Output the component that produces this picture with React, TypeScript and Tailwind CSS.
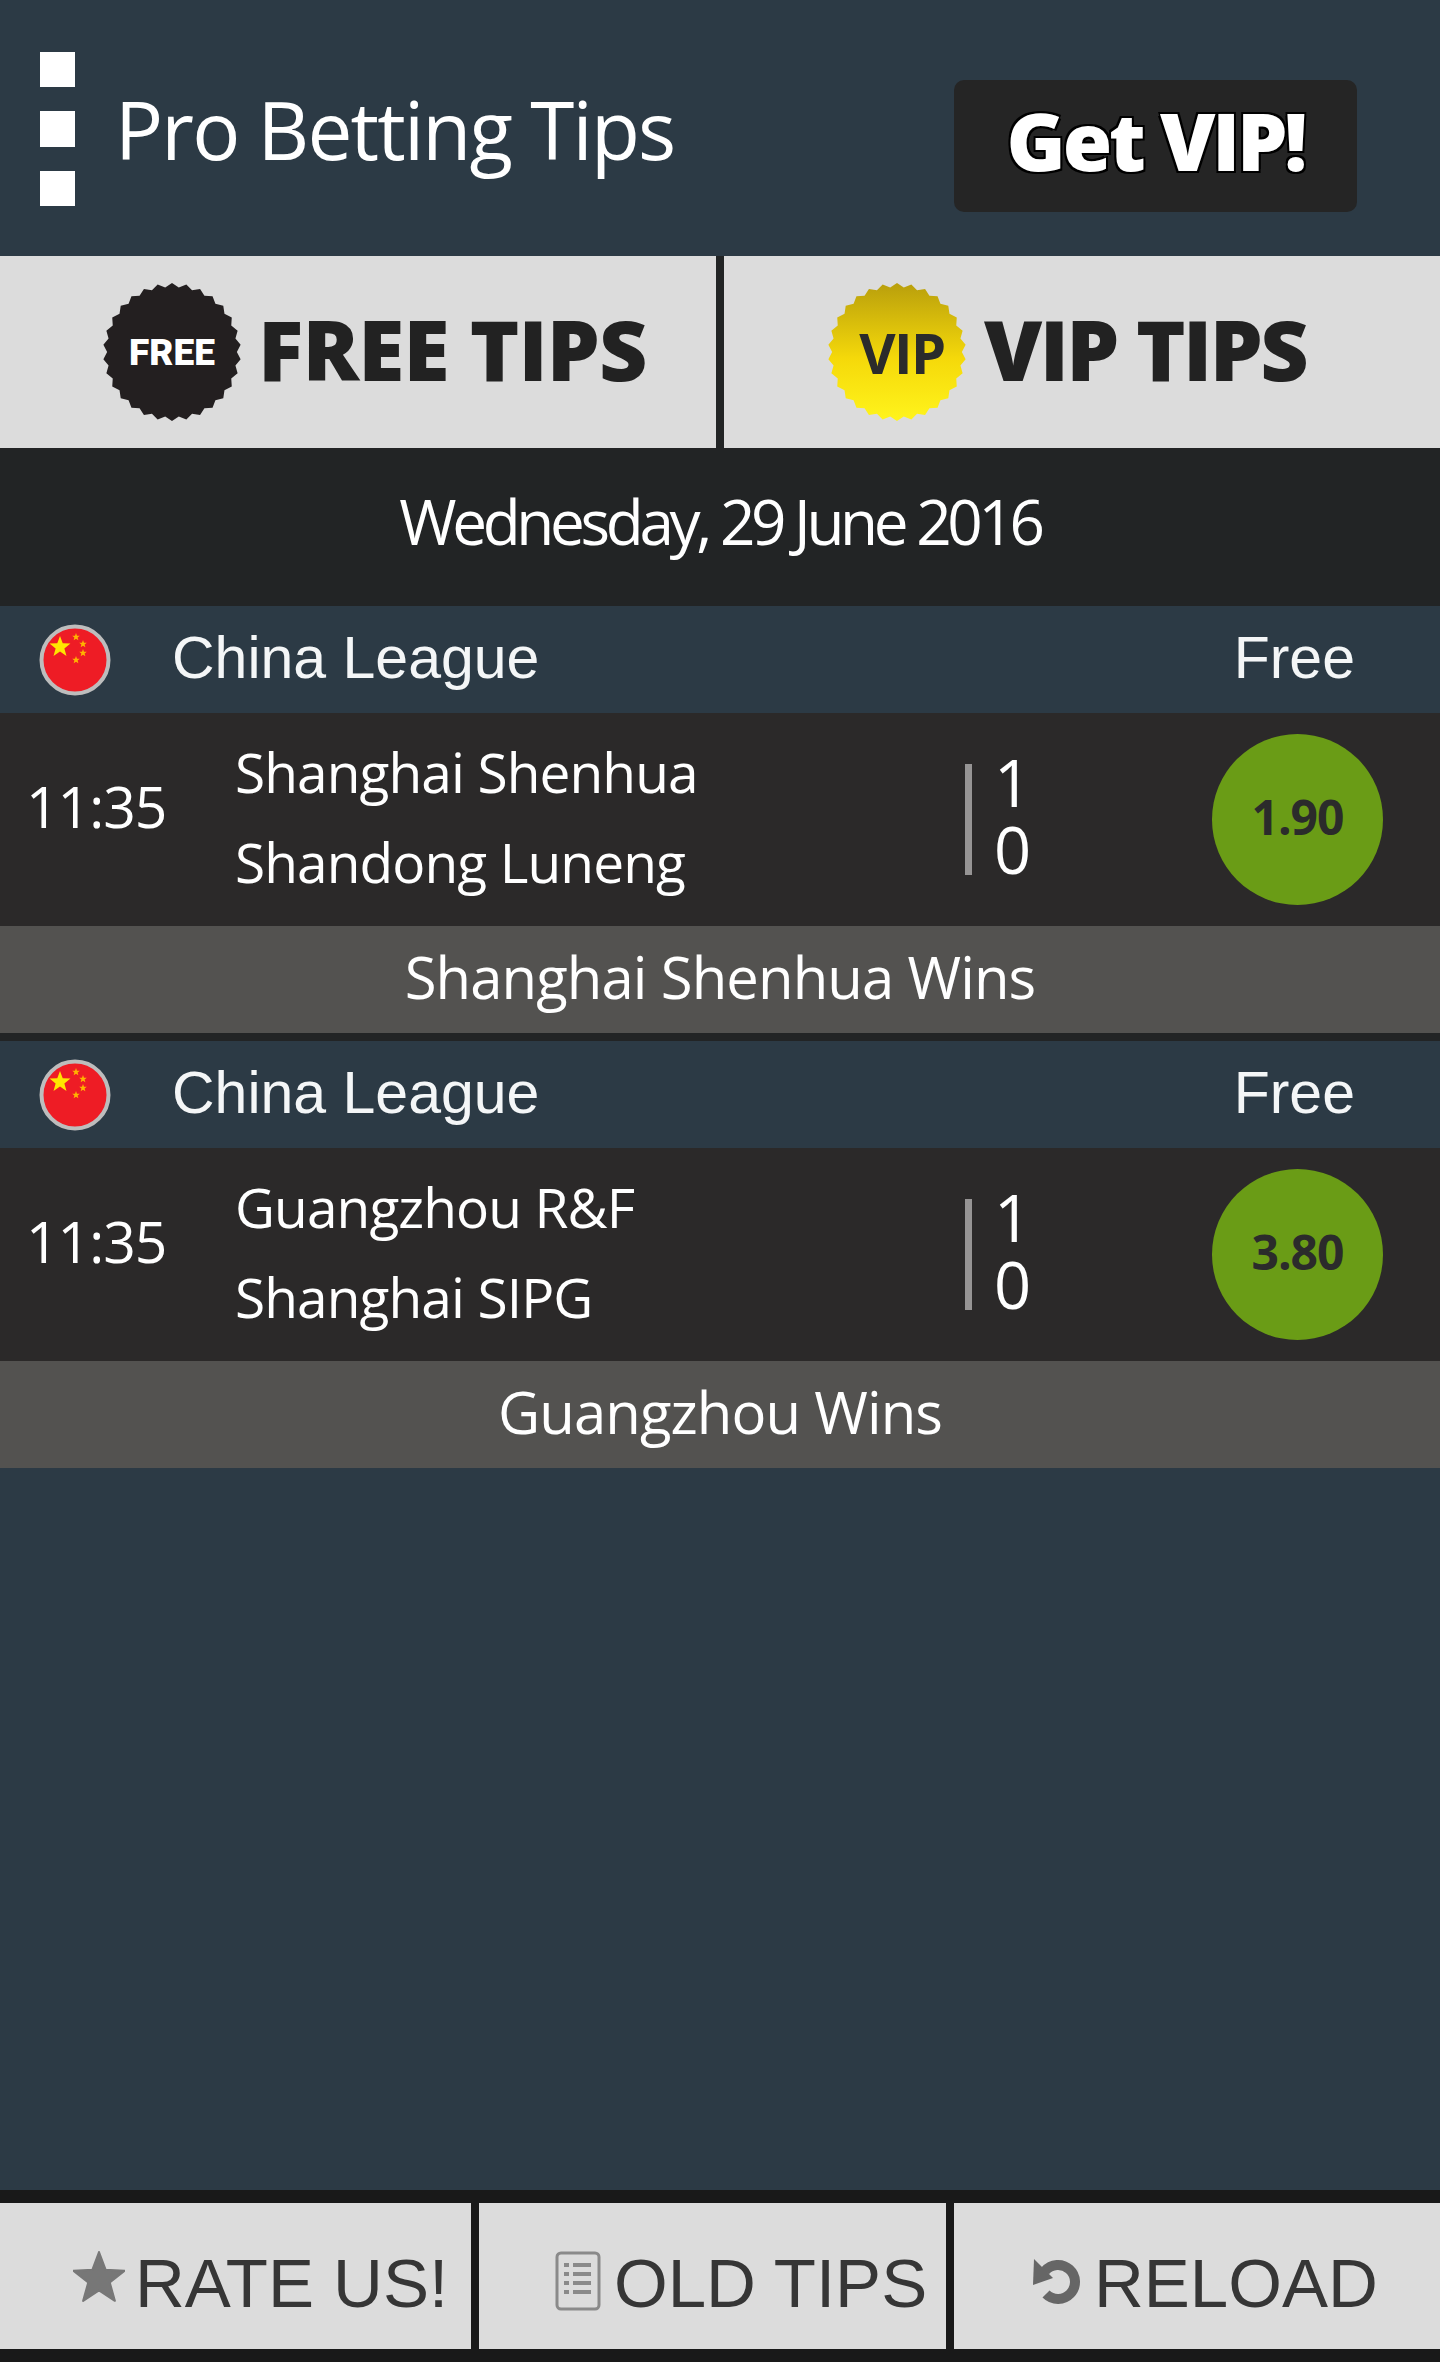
const OPEN = "font-['Open_Sans',sans-serif]";
const ARIAL = "font-['Liberation_Sans',sans-serif]";

// scalloped seal outline used behind FREE / VIP
function sealPoints(teeth: number, outer: number, inner: number) {
  const pts: string[] = [];
  for (let i = 0; i < teeth * 2; i++) {
    const r = i % 2 === 0 ? outer : inner;
    const a = (Math.PI * i) / teeth - Math.PI / 2;
    pts.push(`${(50 + r * Math.cos(a)).toFixed(2)},${(50 + r * Math.sin(a)).toFixed(2)}`);
  }
  return pts.join(" ");
}

function starPoints(cx: number, cy: number, r: number) {
  const pts: string[] = [];
  for (let i = 0; i < 10; i++) {
    const rad = i % 2 === 0 ? r : r * 0.42;
    const a = (Math.PI * i) / 5 - Math.PI / 2;
    pts.push(`${(cx + rad * Math.cos(a)).toFixed(2)},${(cy + rad * Math.sin(a)).toFixed(2)}`);
  }
  return pts.join(" ");
}

function Seal({ vip }: { vip?: boolean }) {
  return (
    <div className="grid h-[138px] w-[138px] shrink-0 place-items-center">
      <svg viewBox="0 0 100 100" className="h-[138px] w-[138px] [grid-area:1/1]">
        <defs>
          <linearGradient id="vipGold" x1="0" y1="0" x2="0" y2="1">
            <stop offset="0" stopColor="#b99f0c" />
            <stop offset="0.55" stopColor="#f5d90a" />
            <stop offset="1" stopColor="#fff41c" />
          </linearGradient>
        </defs>
        <polygon points={sealPoints(30, 50, 47)} fill={vip ? "url(#vipGold)" : "#231f20"} />
      </svg>
      {vip ? (
        <span className={`${OPEN} pl-[10px] text-[56px] leading-none font-bold tracking-[-1.5px] text-[#2b2b2b] [grid-area:1/1]`}>
          VIP
        </span>
      ) : (
        <span className="font-['Roboto',sans-serif] text-[37px] leading-none font-black text-white [grid-area:1/1]">
          FREE
        </span>
      )}
    </div>
  );
}

function Flag() {
  return (
    <svg viewBox="0 0 72 72" className="h-[72px] w-[72px] shrink-0">
      <circle cx="36" cy="36" r="33.5" fill="#ee1c25" stroke="#bdbdbd" strokeWidth="4" />
      <polygon points={starPoints(21, 23, 11)} fill="#ffe600" />
      <polygon points={starPoints(37, 13, 4)} fill="#ffb400" />
      <polygon points={starPoints(44, 20, 4)} fill="#ffb400" />
      <polygon points={starPoints(44, 29, 4)} fill="#ffb400" />
      <polygon points={starPoints(37, 36, 4)} fill="#ffb400" />
    </svg>
  );
}

function Match({ home, away, odds, tip }: { home: string; away: string; odds: string; tip: string }) {
  return (
    <>
      <div className="flex h-[107px] items-center justify-between bg-[#2c3a45] pr-[85px] pl-[39px]">
        <div className="flex items-center gap-[61px]">
          <Flag />
          <span className={`${ARIAL} pb-[2px] text-[59px] leading-none text-[#f4f6f7]`}>China League</span>
        </div>
        <span className={`${ARIAL} pb-[2px] text-[59px] leading-none text-[#f4f6f7]`}>Free</span>
      </div>
      <div className="flex h-[213px] items-center bg-[#2b2929] text-white">
        <div className={`${OPEN} w-[235px] pb-[26px] pl-[26px] text-[57px] leading-none tracking-[-1px]`}>11:35</div>
        <div className={`${OPEN} w-[730px] pb-[6px] text-[55px] leading-[90px] tracking-[-0.9px]`}>
          <div>{home}</div>
          <div>{away}</div>
        </div>
        <div className="h-[111px] w-[7px] bg-[#969494]" />
        <div className={`${OPEN} ml-[22px] w-[218px] pb-[7px] text-[65px] leading-[67px]`}>
          <div>1</div>
          <div>0</div>
        </div>
        <div className="flex h-[171px] w-[171px] items-center justify-center rounded-full bg-[#6a9c16]">
          <span className={`${OPEN} pb-[6px] text-[48px] leading-none font-bold tracking-[-1px] text-[#2b2b2b]`}>{odds}</span>
        </div>
      </div>
      <div className={`${OPEN} flex h-[107px] items-center justify-center bg-[#535250] pb-[6px] text-[58px] leading-none tracking-[-0.9px] text-white`}>
        {tip}
      </div>
    </>
  );
}

function StarIcon() {
  return (
    <svg viewBox="0 0 52 52" className="mt-[2px] h-[52px] w-[52px] shrink-0">
      <polygon points={starPoints(26, 28, 27)} fill="#777777" stroke="#777777" strokeWidth="2" strokeLinejoin="round" />
    </svg>
  );
}

function ListIcon() {
  return (
    <svg viewBox="0 0 46 60" className="mt-[10px] h-[60px] w-[46px] shrink-0">
      <rect x="2" y="2" width="42" height="56" rx="4" fill="none" stroke="#8a8a8a" strokeWidth="3" />
      {[14, 23, 32, 41].map((y) => (
        <g key={y} fill="#8a8a8a">
          <rect x="9" y={y - 2} width="5" height="4" />
          <rect x="18" y={y - 2} width="18" height="4" />
        </g>
      ))}
    </svg>
  );
}

function ReloadIcon() {
  return (
    <svg viewBox="0 0 48 46" className="mt-[12px] h-[46px] w-[48px] shrink-0">
      <path d="M12 12 A17 17 0 1 1 13 35" fill="none" stroke="#666666" strokeWidth="10" />
      <polygon points="1,0 20,19 0,26" fill="#666666" />
    </svg>
  );
}

function FooterButton({ icon, label, className }: { icon: React.ReactNode; label: string; className: string }) {
  return (
    <div className={`flex h-full items-center bg-[#dcdcdc] ${className}`}>
      {icon}
      <span className={`${ARIAL} mt-[14px] text-[69px] leading-none whitespace-nowrap text-[#363636]`}>{label}</span>
    </div>
  );
}

export default function App() {
  return (
    <div className="flex h-[2362px] w-[1440px] flex-col overflow-hidden bg-[#2c3a45]">
      {/* Top bar */}
      <div className="flex h-[256px] items-center bg-[#2c3a45]">
        <div className="ml-[40px] flex flex-col gap-[24px] pt-[1px]">
          <div className="h-[35px] w-[35px] bg-white" />
          <div className="h-[36px] w-[35px] bg-white" />
          <div className="h-[35px] w-[35px] bg-white" />
        </div>
        <div className={`${OPEN} ml-[40px] w-[839px] pt-[2px] text-[80px] leading-none tracking-[-1.8px] text-white`}>
          Pro Betting Tips
        </div>
        <div className="mt-[36px] flex h-[132px] w-[403px] items-center justify-center rounded-[10px] bg-[#252525]">
          <span className={`${OPEN} pb-[12px] text-[80px] leading-none font-extrabold tracking-[-3.2px] text-white [text-shadow:-2px_-2px_0_#000,2px_-2px_0_#000,-2px_2px_0_#000,2px_2px_0_#000]`}>
            Get VIP!
          </span>
        </div>
      </div>

      {/* Tabs */}
      <div className="flex h-[192px] gap-[8px] bg-[#222425]">
        <div className="flex w-[716px] items-center gap-[17px] bg-[#dcdcdc] pl-[103px]">
          <Seal />
          <span className={`${OPEN} pb-[6px] text-[84px] leading-none font-extrabold tracking-[-0.9px] text-[#222222]`}>FREE TIPS</span>
        </div>
        <div className="flex flex-1 items-center gap-[18px] bg-[#dcdcdc] pl-[104px]">
          <Seal vip />
          <span className={`${OPEN} pb-[6px] text-[84px] leading-none font-extrabold tracking-[-2.6px] text-[#222222]`}>VIP TIPS</span>
        </div>
      </div>

      {/* Date */}
      <div className={`${OPEN} flex h-[158px] items-center justify-center bg-[#222425] pb-[12px] text-[62px] leading-none tracking-[-4.3px] text-white`}>
        Wednesday, 29 June 2016
      </div>

      <Match home="Shanghai Shenhua" away="Shandong Luneng" odds="1.90" tip="Shanghai Shenhua Wins" />
      <div className="h-[8px] bg-[#222425]" />
      <Match home="Guangzhou R&F" away="Shanghai SIPG" odds="3.80" tip="Guangzhou Wins" />

      <div className="flex-1" />

      {/* Bottom bar */}
      <div className="flex h-[172px] gap-[8px] bg-[#191919] pt-[13px] pb-[13px]">
        <FooterButton icon={<StarIcon />} label="RATE US!" className="w-[471px] gap-[10px] pl-[73px]" />
        <FooterButton icon={<ListIcon />} label="OLD TIPS" className="w-[467px] gap-[13px] pl-[76px]" />
        <FooterButton icon={<ReloadIcon />} label="RELOAD" className="flex-1 gap-[13px] pl-[79px]" />
      </div>
    </div>
  );
}
